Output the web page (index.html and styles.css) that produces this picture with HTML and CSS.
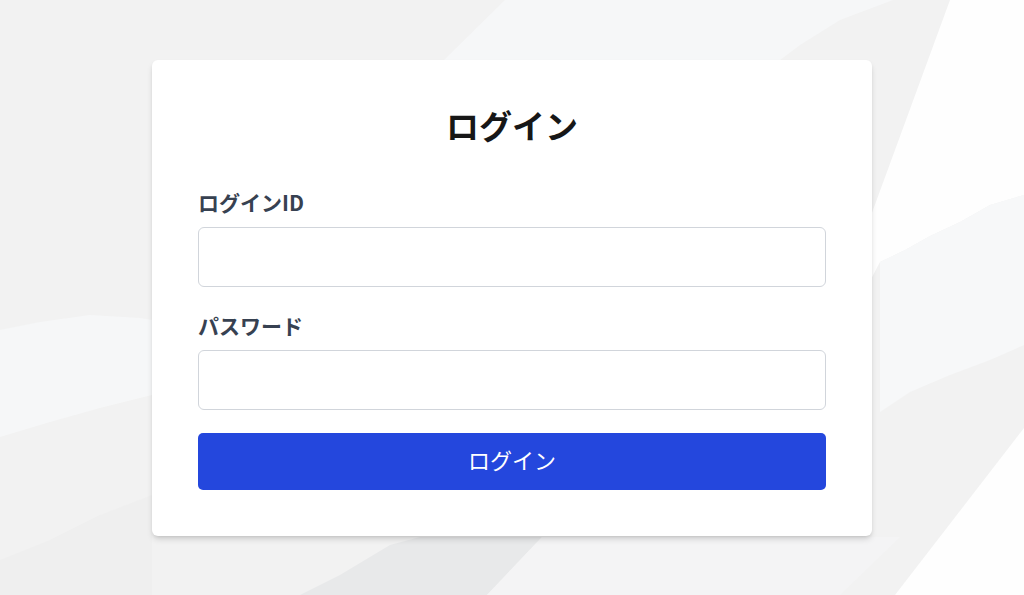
FILE: index.html
```html
<!DOCTYPE html>
<html lang="ja">
<head>
<meta charset="utf-8">
<title>ログイン</title>
<link rel="stylesheet" href="styles.css">
</head>
<body>
<div class="backdrop" aria-hidden="true">
  <svg width="1024" height="595" viewBox="0 0 1024 595" xmlns="http://www.w3.org/2000/svg">
    <rect width="1024" height="595" fill="#f2f2f2"/>
    <polygon points="505,0 893,0 840,20 800,45 700,120 400,300 200,300" fill="#f6f7f8"/>
    <polygon points="950,0 1024,0 1024,195 990,205 960,222 930,236 905,250 880,262 860,300 840,300" fill="#fefefe"/>
    <polygon points="880,262 905,250 930,236 960,222 990,205 1024,195 1024,345 990,360 950,375 910,392 880,412" fill="#f7f8f9"/>
    <polygon points="0,330 40,322 90,315 140,318 152,320 152,395 100,408 50,422 0,437" fill="#f6f7f8"/>
    <polygon points="0,560 50,540 100,515 152,495 152,595 0,595" fill="#efefef"/>
    <polygon points="300,595 340,575 390,545 420,537 542,537 487,595" fill="#e8e9ea"/>
    <polygon points="542,537 900,537 840,595 487,595" fill="#f4f4f5"/>
    <polygon points="1024,428 1024,595 895,595" fill="#fefefe"/>
  </svg>
</div>
<main class="page">
  <form class="card" onsubmit="return false;">
    <h1 class="title">ログイン</h1>
    <div class="field">
      <label class="label" for="login-id">ログインID</label>
      <input class="input" id="login-id" type="text">
    </div>
    <div class="field">
      <label class="label" for="password">パスワード</label>
      <input class="input" id="password" type="password">
    </div>
    <button class="button" type="submit">ログイン</button>
  </form>
</main>
</body>
</html>
```

FILE: styles.css
```css
html, body {
  margin: 0;
  padding: 0;
}
body {
  width: 1024px;
  height: 595px;
  overflow: hidden;
  position: relative;
  background: #f2f2f2;
  font-family: "Noto Sans CJK JP", "Noto Sans", sans-serif;
  color: #111827;
}
.backdrop {
  position: absolute;
  inset: 0;
  z-index: 0;
}
.backdrop svg {
  display: block;
}
.page {
  position: relative;
  z-index: 1;
  display: flex;
  justify-content: center;
  padding-top: 60px;
}
.card {
  width: 720px;
  box-sizing: border-box;
  background: #ffffff;
  border-radius: 6px;
  box-shadow: 0 4px 6px -1px rgba(0,0,0,0.15), 0 2px 4px -2px rgba(0,0,0,0.12);
  padding: 44px 46px 46px;
  display: flex;
  flex-direction: column;
}
.title {
  margin: 0 0 41px;
  text-align: center;
  font-size: 33px;
  line-height: 42px;
  font-weight: 700;
  color: #171717;
}
.field {
  display: flex;
  flex-direction: column;
  gap: 12px;
  margin-bottom: 25px;
}
.title + .field {
  margin-top: 2px;
}
.label {
  font-size: 21px;
  line-height: 26px;
  font-weight: 700;
  color: #374151;
}
.input {
  height: 60px;
  box-sizing: border-box;
  border: 1px solid #d1d5db;
  border-radius: 6px;
  background: #ffffff;
  font-size: 18px;
  padding: 0 14px;
  font-family: inherit;
  outline: none;
}
.button {
  height: 57px;
  margin-top: -2px;
  padding: 0 0 5px;
  border: none;
  border-radius: 5px;
  background: #2447dd;
  color: #ffffff;
  font-family: inherit;
  font-size: 22px;
  font-weight: 400;
  cursor: pointer;
}
```
